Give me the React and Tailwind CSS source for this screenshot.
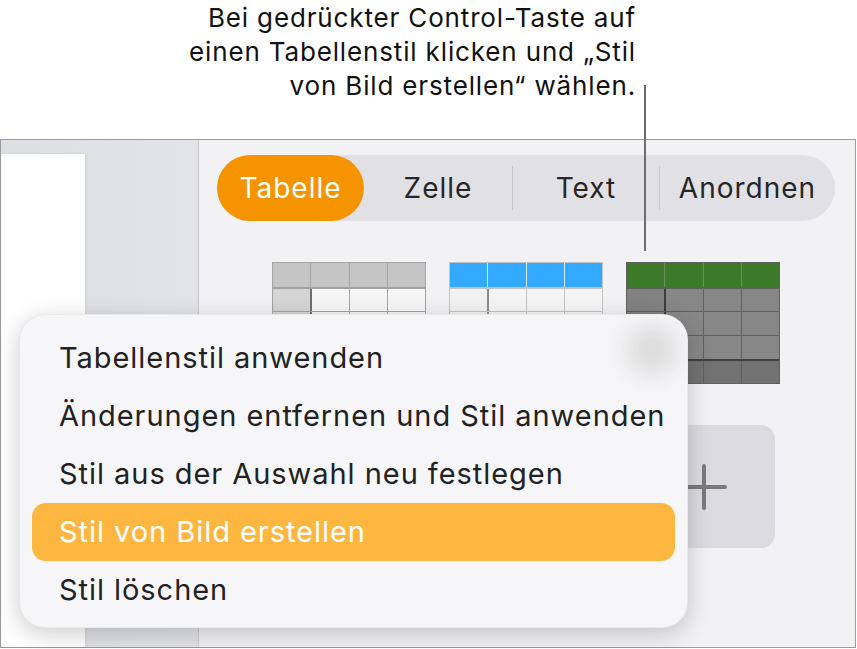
const tabs = [
  { label: 'Zelle', w: 'w-[148px]' },
  { label: 'Text', w: 'w-[147px]' },
  { label: 'Anordnen', w: 'flex-1' },
]

const menuItems = [
  'Tabellenstil anwenden',
  'Änderungen entfernen und Stil anwenden',
  'Stil aus der Auswahl neu festlegen',
  'Stil von Bild erstellen',
  'Stil löschen',
]

function Thumb({ head, headLine, cell, first, line, firstLine, foot, footLine }) {
  const rows = [0, 1, 2, 3, 4]
  const cols = [0, 1, 2, 3]
  return (
    <div className="flex w-[154px] flex-col border" style={{ borderColor: line, background: line }}>
      {rows.map((r) => (
        <div
          key={r}
          className="flex h-[24px]"
          style={{
            borderTop: r === 0 ? 'none' : `${r === 1 || (foot && r === 4) ? 2 : 1}px solid ${r === 4 && foot ? footLine : line}`,
          }}
        >
          {cols.map((c) => (
            <div
              key={c}
              className="flex-1"
              style={{
                background: r === 0 ? head : r === 4 && foot ? foot : c === 0 ? first : cell,
                borderLeft:
                  c === 0
                    ? 'none'
                    : `${c === 1 && r > 0 ? 2 : 1}px solid ${r === 0 ? headLine || line : c === 1 ? firstLine : line}`,
              }}
            />
          ))}
        </div>
      ))}
    </div>
  )
}

export default function App() {
  return (
    <div className="relative h-[649px] w-[857px] overflow-hidden bg-white font-['Inter',sans-serif]">
      <div className="flex h-[139px] justify-end pr-[221px] pt-[1px]">
        <p className="text-right text-[26px] leading-[34px] tracking-[0.85px] text-[#111]">
          Bei gedrückter Control-Taste auf
          <br />
          einen Tabellenstil klicken und „Stil
          <br />
          von Bild erstellen“ wählen.
        </p>
      </div>

      <div className="flex h-[509px] w-[856px] border border-[#9b9b9b]">
        <div className="w-[197px] bg-gradient-to-r from-[#dedfe3] to-[#e3e4e8] pt-[14px]">
          <div className="h-full w-[84px] bg-white shadow-[1px_0_3px_rgba(0,0,0,0.08)]" />
        </div>
        <div className="w-px bg-[#c8c8cc]" />
        <div className="flex-1 bg-[#f2f2f5] pl-[18px] pt-[15px]">
          <div className="flex h-[66px] w-[618px] items-center rounded-full bg-[#e1e1e5]">
            <div className="flex h-full w-[147px] items-center justify-center rounded-full bg-[#f59300] text-[28px] tracking-[1px] text-white">
              Tabelle
            </div>
            {tabs.map((t, i) => (
              <div key={t.label} className={`flex h-full items-center ${t.w}`}>
                {i > 0 && <div className="h-[44px] w-px bg-[#c6c6ca]" />}
                <div className="flex flex-1 justify-center text-[28px] tracking-[1px] text-[#262626]">{t.label}</div>
              </div>
            ))}
          </div>

          <div className="mt-[41px] flex gap-[23px] pl-[55px]">
            <Thumb head="#c4c5c4" cell="#f5f5f5" first="#d5d5d5" line="#a3a3a3" firstLine="#6e6e6e" />
            <Thumb head="#33a9ff" headLine="#d8ecfa" cell="#f5f5f5" first="#f2f2f2" line="#c2c2c2" firstLine="#8a8a8a" />
            <Thumb
              head="#3c7a2a"
              headLine="#6d8f62"
              cell="#878787"
              first="#828282"
              line="#5f5f5f"
              firstLine="#3d3d3d"
              foot="#727272"
              footLine="#3f3f3f"
            />
          </div>

          <div className="ml-[416px] mt-[41px] flex h-[123px] w-[142px] items-center justify-center rounded-[14px] bg-[#dcdce0]">
            <svg width="46" height="46" viewBox="0 0 46 46">
              <path d="M23 2v42M2 23h42" stroke="#7a7a7a" strokeWidth="4" strokeLinecap="round" />
            </svg>
          </div>
        </div>
      </div>

      <div className="absolute left-[644px] top-[85px] h-[166px] w-[2px] bg-[#6d6d6d]" />

      <div className="absolute left-[19px] top-[314px] h-[314px] w-[669px] overflow-hidden rounded-[26px] border border-black/5 bg-[#f6f6f8] px-[12px] pt-[14px] shadow-[0_6px_24px_rgba(0,0,0,0.2)]">
        <div className="absolute right-[10px] top-[10px] h-[50px] w-[50px] rounded-full bg-[#c9c9c9] opacity-60 blur-md" />
        {menuItems.map((m, i) => (
          <div
            key={m}
            className={
              i === 3
                ? 'relative flex h-[58px] items-center rounded-[14px] bg-[#fdb740] pl-[27px] text-[29px] tracking-[0.95px] text-white'
                : 'relative flex h-[58px] items-center pl-[27px] text-[29px] tracking-[0.95px] text-[#222]'
            }
          >
            {m}
          </div>
        ))}
      </div>
    </div>
  )
}
